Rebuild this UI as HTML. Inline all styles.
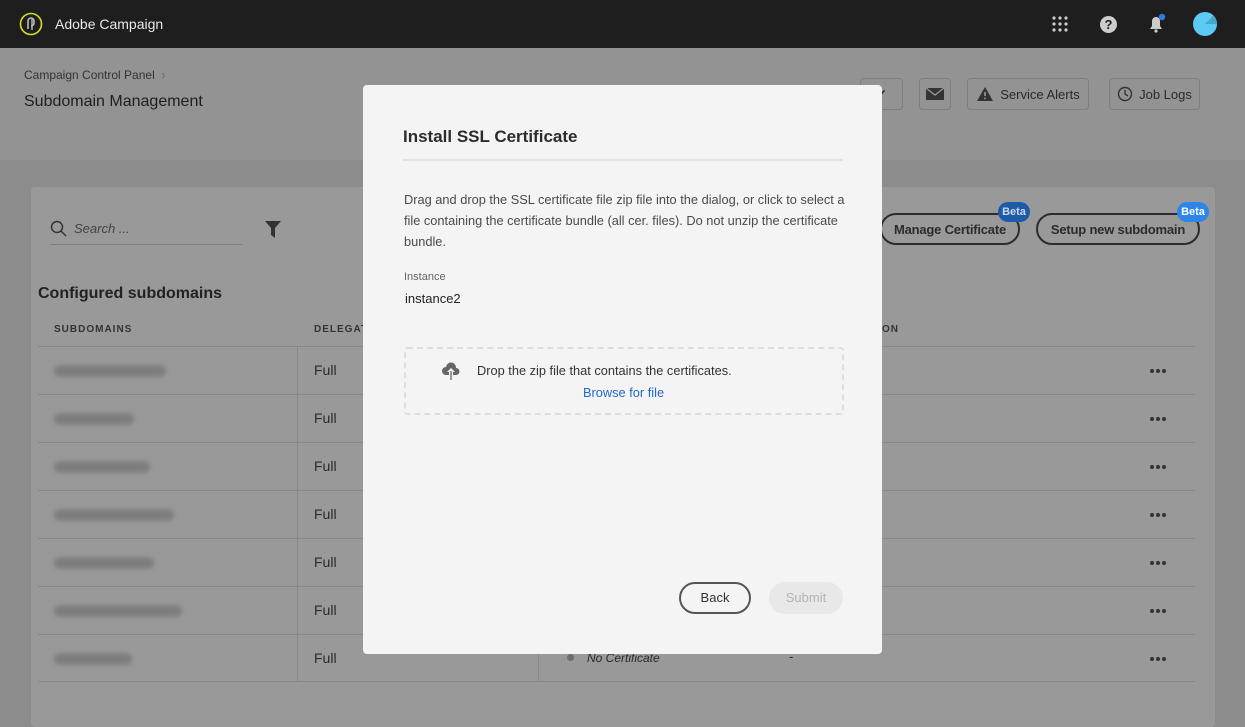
<!DOCTYPE html>
<html><head><meta charset="utf-8"><style>
*{box-sizing:border-box;margin:0;padding:0}
body{width:1245px;height:717px;overflow:hidden;font-family:"Liberation Sans",sans-serif;background:#8c8c8c;position:relative;color:#2c2c2c}
.top{position:absolute;left:0;top:0;width:1245px;height:48px;background:#1e1e1e;color:#e8e8e8}
.band{position:absolute;left:0;top:48px;width:1245px;height:112px;background:#939393}
.card{position:absolute;left:31px;top:187px;width:1184px;height:540px;background:#999;border-radius:4px}
.abs{position:absolute}
.btn{position:absolute;border:1px solid #7e7e7e;border-radius:4px;height:32px;font-size:13px;color:#2a2a2a;display:flex;align-items:center;justify-content:center;gap:6px}
.pill{position:absolute;border:2px solid #2c2c2c;border-radius:16px;height:32px;font-size:13px;font-weight:bold;color:#2c2c2c;display:flex;align-items:center;justify-content:center;letter-spacing:-0.2px}
.beta{position:absolute;height:20px;border-radius:10px;color:#fff;font-size:11px;font-weight:bold;display:flex;align-items:center;justify-content:center;width:32px}
.row{position:absolute;left:38px;width:1157px;height:48px;border-top:1px solid #888}
.blur{position:absolute;left:16px;top:18px;height:12px;background:#7e7e7e;border-radius:6px;filter:blur(2px)}
.full{position:absolute;left:276px;top:15px;font-size:14px;color:#2a2a2a}
.dots{position:absolute;left:1112px;top:22px;display:flex;gap:2px}
.dots i{width:4px;height:4px;border-radius:50%;background:#333;display:block}
.modal{position:absolute;left:363px;top:85px;width:519px;height:569px;background:#f4f4f4;border-radius:4px}
</style></head><body>
<div class="top">
 <svg class="abs" style="left:19px;top:12px" width="24" height="24" viewBox="0 0 24 24"><circle cx="12" cy="12" r="10.5" fill="none" stroke="#d7dc2a" stroke-width="1.6"/><path d="M9 17V9a3 3 0 0 1 6 0v2a3 3 0 0 1-3 3" fill="none" stroke="#bbb" stroke-width="1.6"/><path d="M13 6v12" stroke="#bbb" stroke-width="1.4"/></svg>
 <div class="abs" style="left:55px;top:16px;font-size:14px">Adobe Campaign</div>
 <svg class="abs" style="left:1052px;top:16px" width="16" height="16"><g fill="#ccc"><circle cx="2" cy="2" r="1.6"/><circle cx="8" cy="2" r="1.6"/><circle cx="14" cy="2" r="1.6"/><circle cx="2" cy="8" r="1.6"/><circle cx="8" cy="8" r="1.6"/><circle cx="14" cy="8" r="1.6"/><circle cx="2" cy="14" r="1.6"/><circle cx="8" cy="14" r="1.6"/><circle cx="14" cy="14" r="1.6"/></g></svg>
 <div class="abs" style="left:1100px;top:16px;width:17px;height:17px;border-radius:50%;background:#ccc;color:#1e1e1e;font-size:13px;font-weight:bold;text-align:center;line-height:17px">?</div>
 <svg class="abs" style="left:1147px;top:13px" width="20" height="20"><path d="M3 16h12l-2-3V8a4 4 0 0 0-8 0v5z" fill="#ccc"/><circle cx="9" cy="18" r="1.6" fill="#ccc"/><circle cx="15" cy="4" r="3.2" fill="#2b7be4"/></svg>
 <div class="abs" style="left:1193px;top:12px;width:24px;height:24px;border-radius:50%;background:#5bcaf5;overflow:hidden"><div style="position:absolute;left:12px;top:0;width:12px;height:12px;background:#4aa6c9;clip-path:polygon(100% 0,100% 100%,0 100%)"></div></div>
</div>
<div class="band"></div>
<div class="abs" style="left:24px;top:68px;font-size:12px;color:#333">Campaign Control Panel &nbsp;<span style="color:#666">›</span></div>
<div class="abs" style="left:24px;top:93px;font-size:16px;color:#1e1e1e">Subdomain Management</div>
<div class="btn" style="left:860px;top:78px;width:43px;font-size:12px">✔</div>
<div class="btn" style="left:919px;top:78px;width:32px"><svg width="20" height="16"><path d="M1 2h18v12H1z" fill="#333"/><path d="M1 2l9 7 9-7" stroke="#999" stroke-width="1.3" fill="none"/></svg></div>
<div class="btn" style="left:967px;top:78px;width:122px"><svg width="18" height="16"><path d="M9 1l8 14H1z" fill="#333"/><path d="M9 6v4" stroke="#999" stroke-width="1.6"/><circle cx="9" cy="12.3" r="0.9" fill="#999"/></svg>Service Alerts</div>
<div class="btn" style="left:1109px;top:78px;width:91px"><svg width="16" height="16"><circle cx="8" cy="8" r="6.5" fill="none" stroke="#333" stroke-width="1.4"/><path d="M8 4v4l3 2" stroke="#333" stroke-width="1.4" fill="none"/></svg>Job Logs</div>
<div class="card"></div>
<svg class="abs" style="left:50px;top:220px" width="18" height="18"><circle cx="7" cy="7" r="5.5" fill="none" stroke="#333" stroke-width="1.5"/><path d="M11 11l5 5" stroke="#333" stroke-width="1.5"/></svg>
<div class="abs" style="left:74px;top:221px;font-size:13px;font-style:italic;color:#444">Search ...</div>
<div class="abs" style="left:50px;top:244px;width:192px;height:1px;background:#808080"></div>
<svg class="abs" style="left:265px;top:221px" width="16" height="17"><path d="M0 0h16l-6 7v10l-4-3V7z" fill="#333"/></svg>
<div class="pill" style="left:880px;top:213px;width:140px">Manage Certificate</div>
<div class="beta" style="left:998px;top:202px;background:#1f5aa8;color:#cbd8ee">Beta</div>
<div class="pill" style="left:1036px;top:213px;width:164px">Setup new subdomain</div>
<div class="beta" style="left:1177px;top:202px;background:#2b86e8">Beta</div>
<div class="abs" style="left:38px;top:285px;font-size:16px;font-weight:bold;color:#222">Configured subdomains</div>
<div class="abs" style="left:54px;top:324px;font-size:10px;font-weight:bold;letter-spacing:1px;color:#333">SUBDOMAINS</div>
<div class="abs" style="left:314px;top:324px;font-size:10px;font-weight:bold;letter-spacing:1px;color:#333">DELEGATI</div>
<div class="abs" style="left:882px;top:324px;font-size:10px;font-weight:bold;letter-spacing:1px;color:#333">ON</div>
<div class="row" style="top:346px"><div class="blur" style="width:112px"></div><div class="full">Full</div><div class="dots"><i></i><i></i><i></i></div></div>
<div class="row" style="top:394px"><div class="blur" style="width:80px"></div><div class="full">Full</div><div class="dots"><i></i><i></i><i></i></div></div>
<div class="row" style="top:442px"><div class="blur" style="width:96px"></div><div class="full">Full</div><div class="dots"><i></i><i></i><i></i></div></div>
<div class="row" style="top:490px"><div class="blur" style="width:120px"></div><div class="full">Full</div><div class="dots"><i></i><i></i><i></i></div></div>
<div class="row" style="top:538px"><div class="blur" style="width:100px"></div><div class="full">Full</div><div class="dots"><i></i><i></i><i></i></div></div>
<div class="row" style="top:586px"><div class="blur" style="width:128px"></div><div class="full">Full</div><div class="dots"><i></i><i></i><i></i></div></div>
<div class="row" style="top:634px;border-bottom:1px solid #888"><div class="blur" style="width:78px"></div><div class="full">Full</div><div class="dots"><i></i><i></i><i></i></div>
 <div class="abs" style="left:529px;top:19px;width:7px;height:7px;border-radius:50%;background:#6e6e6e"></div>
 <div class="abs" style="left:549px;top:16px;font-size:12px;font-style:italic;color:#2a2a2a">No Certificate</div>
 <div class="abs" style="left:751px;top:14px;font-size:13px">-</div></div>
<div class="abs" style="left:297px;top:346px;width:1px;height:336px;background:#888"></div>
<div class="abs" style="left:538px;top:634px;width:1px;height:48px;background:#888"></div>
<div class="modal">
 <div class="abs" style="left:40px;top:42px;font-size:17px;font-weight:bold;color:#2c2c2c">Install SSL Certificate</div>
 <div class="abs" style="left:40px;top:74px;width:440px;height:2px;background:#e1e1e1"></div>
 <div class="abs" style="left:41px;top:104px;width:460px;font-size:12.8px;line-height:21px;color:#4a4a4a;white-space:nowrap">Drag and drop the SSL certificate file zip file into the dialog, or click to select a<br>file containing the certificate bundle (all cer. files). Do not unzip the certificate<br>bundle.</div>
 <div class="abs" style="left:41px;top:186px;font-size:11px;color:#666">Instance</div>
 <div class="abs" style="left:42px;top:206px;font-size:13px;color:#222">instance2</div>
 <div class="abs" style="left:41px;top:262px;width:440px;height:68px;border:2px dashed #ddd;border-radius:3px"></div>
 <svg class="abs" style="left:78px;top:276px" width="20" height="20"><path d="M5 14a4 4 0 0 1 0-8 5 5 0 0 1 10 1 3.5 3.5 0 0 1 0 7h-3v-3h2l-4-4-4 4h2v3z" fill="#666"/><path d="M10 10v9" stroke="#666" stroke-width="1.3"/></svg>
 <div class="abs" style="left:114px;top:278px;font-size:12.8px;color:#333">Drop the zip file that contains the certificates.</div>
 <div class="abs" style="left:220px;top:300px;font-size:12.8px;color:#2168d0">Browse for file</div>
 <div class="abs" style="left:316px;top:497px;width:72px;height:32px;border:2px solid #555;border-radius:16px;font-size:13px;color:#333;text-align:center;line-height:28px">Back</div>
 <div class="abs" style="left:406px;top:497px;width:74px;height:32px;background:#e8e8e8;border-radius:16px;font-size:13px;color:#b4b4b4;text-align:center;line-height:32px">Submit</div>
</div>
</body></html>
